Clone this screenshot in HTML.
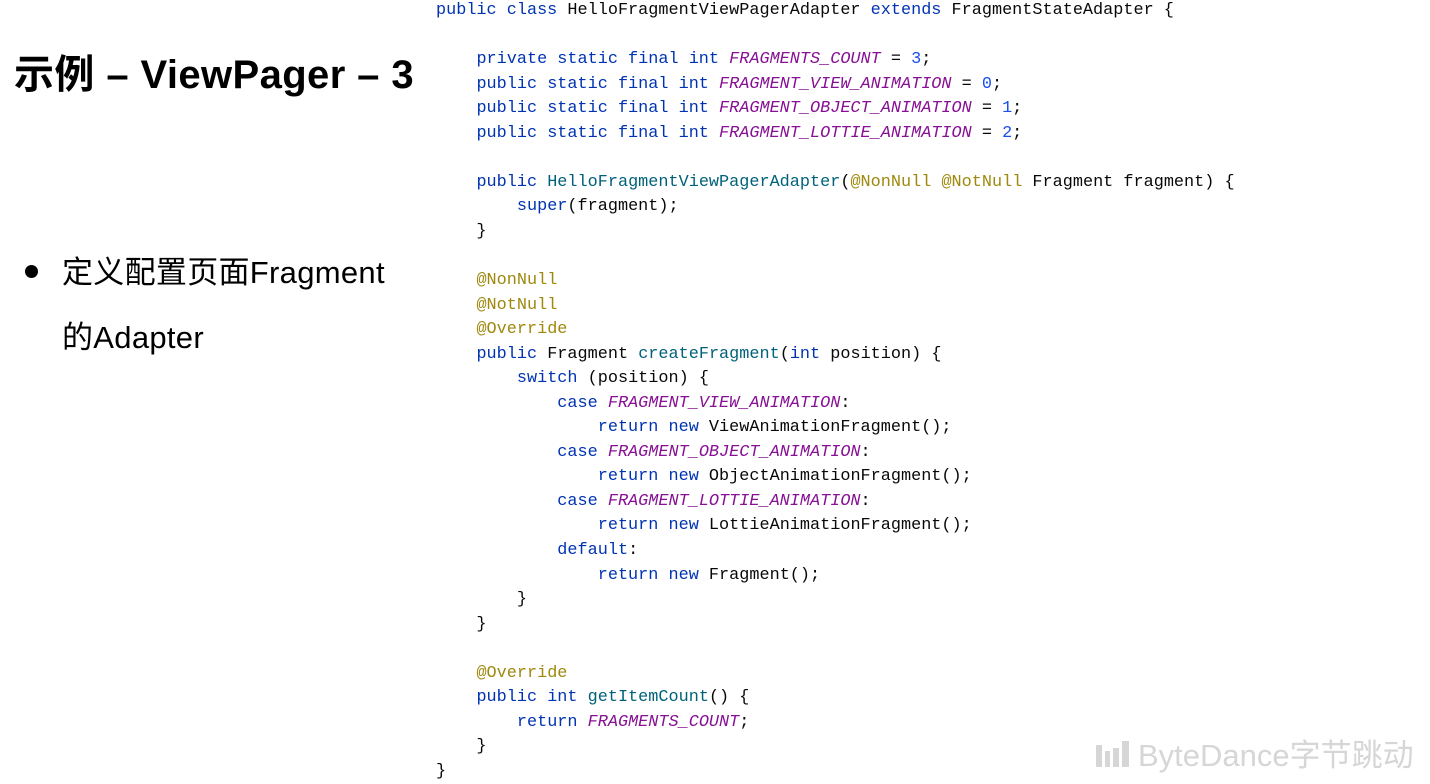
<!DOCTYPE html>
<html><head><meta charset="utf-8"><style>
html,body{margin:0;padding:0;background:#fff;width:1430px;height:784px;overflow:hidden;position:relative}
.t{position:absolute;left:14px;top:42px;font:bold 40px "Liberation Sans","Noto Sans CJK SC",sans-serif;color:#000;white-space:nowrap;letter-spacing:0.4px}
.b{position:absolute;left:62px;top:240px;font:31px/65px "Liberation Sans","Noto Sans CJK SC",sans-serif;color:#000;white-space:nowrap;letter-spacing:0.3px}
.dot{position:absolute;left:25px;top:265px;width:13px;height:13px;border-radius:50%;background:#000}
pre{position:absolute;left:436px;top:-1px;margin:0;font:16.85px/24.55px "Liberation Mono",monospace;color:#080808}
.k{color:#0033b3}.p{color:#871094;font-style:italic}.a{color:#9e880d}.m{color:#00627a}.n{color:#1750eb}
.logo{position:absolute;left:1096px;top:730px;font:31px "Liberation Sans","Noto Sans CJK SC",sans-serif;color:#d6d6d6;white-space:nowrap}
</style></head><body>
<div class="t">示例 – ViewPager – 3</div>
<div class="dot"></div>
<div class="b">定义配置页面Fragment<br>的Adapter</div>
<pre><span class="k">public class</span> HelloFragmentViewPagerAdapter <span class="k">extends</span> FragmentStateAdapter {

    <span class="k">private static final int</span> <span class="p">FRAGMENTS_COUNT</span> = <span class="n">3</span>;
    <span class="k">public static final int</span> <span class="p">FRAGMENT_VIEW_ANIMATION</span> = <span class="n">0</span>;
    <span class="k">public static final int</span> <span class="p">FRAGMENT_OBJECT_ANIMATION</span> = <span class="n">1</span>;
    <span class="k">public static final int</span> <span class="p">FRAGMENT_LOTTIE_ANIMATION</span> = <span class="n">2</span>;

    <span class="k">public</span> <span class="m">HelloFragmentViewPagerAdapter</span>(<span class="a">@NonNull</span> <span class="a">@NotNull</span> Fragment fragment) {
        <span class="k">super</span>(fragment);
    }

    <span class="a">@NonNull</span>
    <span class="a">@NotNull</span>
    <span class="a">@Override</span>
    <span class="k">public</span> Fragment <span class="m">createFragment</span>(<span class="k">int</span> position) {
        <span class="k">switch</span> (position) {
            <span class="k">case</span> <span class="p">FRAGMENT_VIEW_ANIMATION</span>:
                <span class="k">return new</span> ViewAnimationFragment();
            <span class="k">case</span> <span class="p">FRAGMENT_OBJECT_ANIMATION</span>:
                <span class="k">return new</span> ObjectAnimationFragment();
            <span class="k">case</span> <span class="p">FRAGMENT_LOTTIE_ANIMATION</span>:
                <span class="k">return new</span> LottieAnimationFragment();
            <span class="k">default</span>:
                <span class="k">return new</span> Fragment();
        }
    }

    <span class="a">@Override</span>
    <span class="k">public int</span> <span class="m">getItemCount</span>() {
        <span class="k">return</span> <span class="p">FRAGMENTS_COUNT</span>;
    }
}</pre>
<div class="logo"><svg width="34" height="30" viewBox="0 0 34 30" style="vertical-align:-3px;margin-right:8px"><rect x="0" y="6" width="6" height="22" fill="#d6d6d6"/><rect x="9" y="12" width="5" height="16" fill="#d6d6d6"/><rect x="17" y="9" width="6" height="19" fill="#d6d6d6"/><rect x="26" y="2" width="7" height="26" fill="#d6d6d6"/></svg>ByteDance字节跳动</div>
</body></html>
